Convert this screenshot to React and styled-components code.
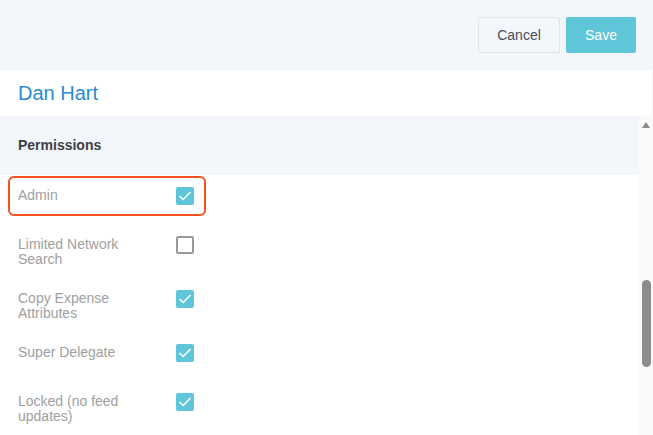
import React from 'react';
import styled, { createGlobalStyle } from 'styled-components';

const permissions = [
  { label: 'Admin', checked: true, highlighted: true },
  { label: 'Limited Network Search', checked: false },
  { label: 'Copy Expense Attributes', checked: true },
  { label: 'Super Delegate', checked: true },
  { label: 'Locked (no feed updates)', checked: true },
];

const GlobalStyle = createGlobalStyle`
  html, body {
    margin: 0;
    padding: 0;
    background: #f3f6fa;
  }
  body {
    font-family: "Liberation Sans", Arial, sans-serif;
  }
`;

const Page = styled.div`
  width: 653px;
  height: 435px;
  display: flex;
  flex-direction: column;
  background: #f3f6fa;
  overflow: hidden;
`;

const Toolbar = styled.div`
  height: 70px;
  flex-shrink: 0;
  display: flex;
  align-items: center;
  justify-content: flex-end;
  gap: 6px;
  padding: 0 17px 1px 0;
  box-sizing: border-box;
`;

const Button = styled.button`
  height: 36px;
  padding: 0;
  width: ${p => (p.$primary ? '70px' : '82px')};
  border-radius: 2px;
  font-family: inherit;
  font-size: 14px;
  cursor: pointer;
  border: 1px solid ${p => (p.$primary ? '#5fc5d8' : '#e1e5ea')};
  background: ${p => (p.$primary ? '#5fc5d8' : '#f3f6fa')};
  color: ${p => (p.$primary ? '#ffffff' : '#4a4f5a')};
`;

const NameBar = styled.div`
  height: 46px;
  flex-shrink: 0;
  margin-right: 1px;
  background: #ffffff;
  display: flex;
  align-items: center;
  padding-left: 18px;
  font-size: 20px;
  color: #2b8bd2;
`;

const Body = styled.div`
  flex: 1;
  display: flex;
  min-height: 0;
  background: #ffffff;
`;

const Content = styled.div`
  flex: 1;
  display: flex;
  flex-direction: column;
`;

const SectionHeader = styled.div`
  height: 59px;
  display: flex;
  align-items: center;
  padding: 0 0 2px 18px;
  box-sizing: border-box;
  background: #f3f6fa;
  font-size: 14px;
  font-weight: bold;
  color: #3d3f48;
`;

const List = styled.ul`
  list-style: none;
  margin: 0;
  padding: 1px 0 0 8px;
  display: flex;
  flex-direction: column;
  gap: 9px;
`;

const Row = styled.li`
  width: 198px;
  min-height: 40px;
  box-sizing: border-box;
  display: flex;
  align-items: flex-start;
  justify-content: space-between;
  padding: 10px 10px 1px 8px;
  border: 2px solid ${p => (p.$highlighted ? '#f4511e' : 'transparent')};
  border-radius: 6px;
`;

const Label = styled.span`
  width: 130px;
  font-size: 14px;
  line-height: 15px;
  color: #a0a0a0;
`;

const Box = styled.span`
  width: 18px;
  height: 18px;
  box-sizing: border-box;
  margin-top: -1px;
  border-radius: 2px;
  display: flex;
  align-items: center;
  justify-content: center;
  background: ${p => (p.$checked ? '#5fc5d8' : '#ffffff')};
  border: 2px solid ${p => (p.$checked ? '#5fc5d8' : '#9a9a9a')};
`;

const Scrollbar = styled.div`
  width: 14px;
  flex-shrink: 0;
  background: #fafafa;
  display: flex;
  flex-direction: column;
  align-items: center;
`;

const ArrowUp = styled.span`
  margin-top: 6px;
  width: 0;
  height: 0;
  border-left: 4px solid transparent;
  border-right: 4px solid transparent;
  border-bottom: 6px solid #8a8a8a;
`;

const Thumb = styled.span`
  margin-top: 152px;
  width: 9px;
  height: 87px;
  border-radius: 5px;
  background: #8c8c8c;
`;

const Checkbox = ({ checked }) => (
  <Box $checked={checked}>
    {checked && (
      <svg width="14" height="12" viewBox="0 0 14 12">
        <path d="M1.5 6 L5.2 9.5 L12.5 2" fill="none" stroke="#ffffff" strokeWidth="1.6" />
      </svg>
    )}
  </Box>
);

export default function App() {
  return (
    <>
      <GlobalStyle />
      <Page>
        <Toolbar>
          <Button>Cancel</Button>
          <Button $primary>Save</Button>
        </Toolbar>
        <NameBar>Dan Hart</NameBar>
        <Body>
          <Content>
            <SectionHeader>Permissions</SectionHeader>
            <List>
              {permissions.map(item => (
                <Row key={item.label} $highlighted={item.highlighted}>
                  <Label>{item.label}</Label>
                  <Checkbox checked={item.checked} />
                </Row>
              ))}
            </List>
          </Content>
          <Scrollbar>
            <ArrowUp />
            <Thumb />
          </Scrollbar>
        </Body>
      </Page>
    </>
  );
}
